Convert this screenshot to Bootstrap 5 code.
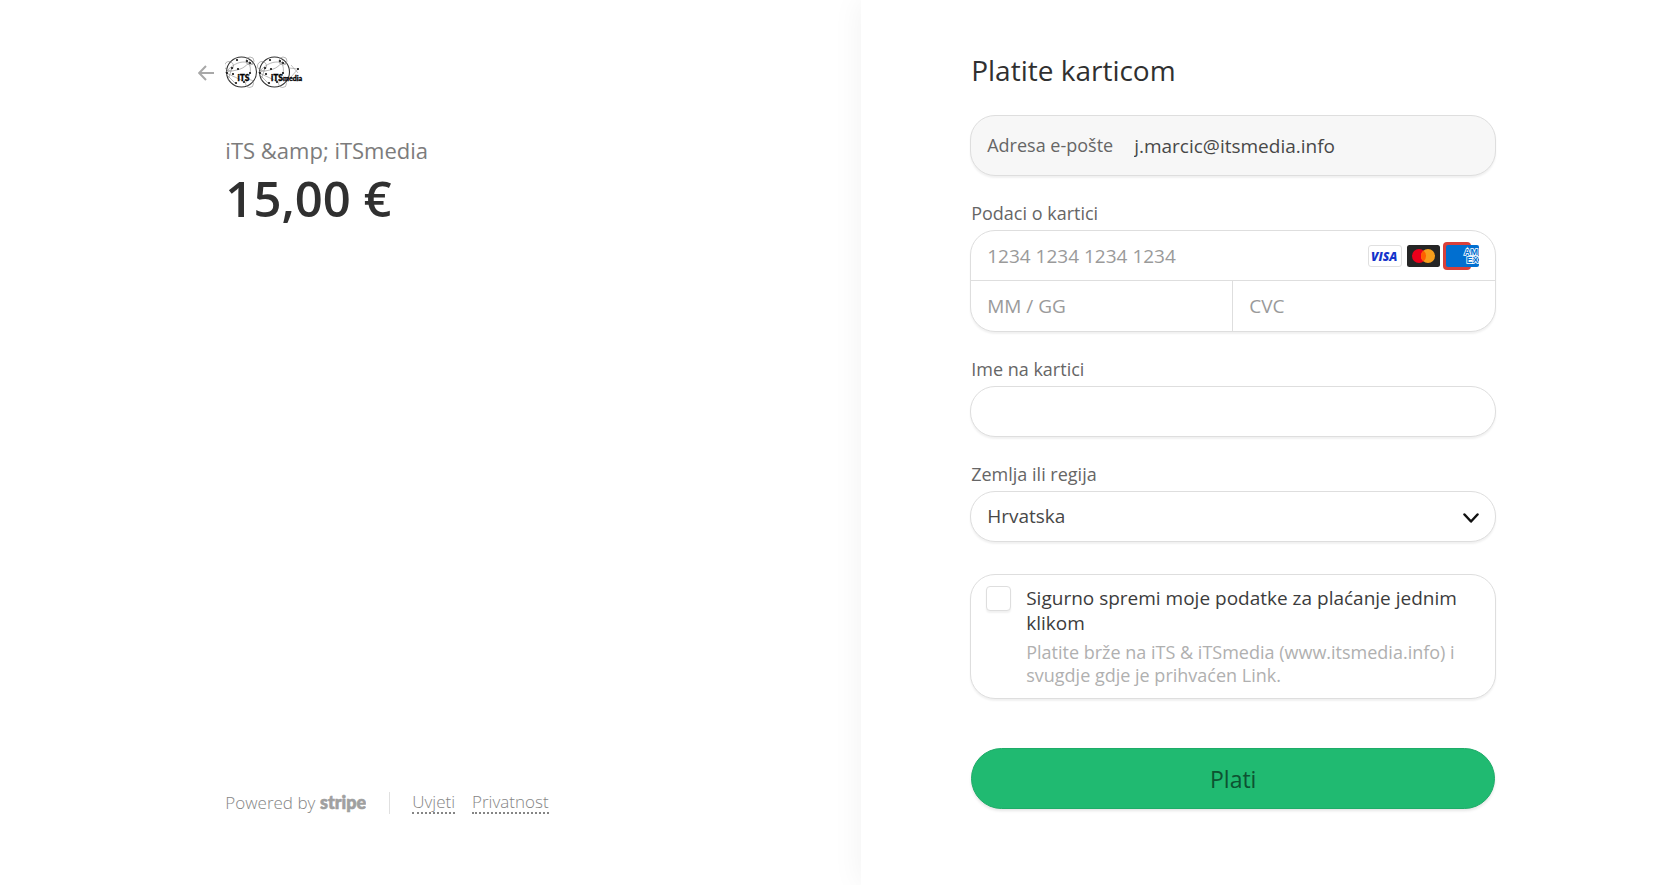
<!DOCTYPE html>
<html lang="hr">
<head>
<meta charset="utf-8">
<meta name="viewport" content="width=device-width, initial-scale=1">
<title>iTS &amp; iTSmedia</title>
<link href="https://cdn.jsdelivr.net/npm/bootstrap@5.3.0/dist/css/bootstrap.min.css" rel="stylesheet">
<style>
  body { font-family: "Open Sans", sans-serif; color: #303030; background: #fff; }
  .summary { width: 52.1%; padding: 56px 24px 69px 12%; }
  .summary-head { gap: 11px; }
  .back-link { line-height: 0; }
  .summary-body { padding-left: 27px; }
  .product { font-size: 22px; line-height: 32px; color: #7c7c7c; margin-top: 45px; }
  .amount { font-size: 49px; line-height: 64px; font-weight: 600; color: #303030; }
  .foot { font-size: 17px; line-height: 26px; font-weight: 300; color: #858585; padding-left: 27px; }
  .foot a { color: #858585; text-decoration: none; line-height: 20px; border-bottom: 2px dotted #858585; }
  .foot .rule { border-left: 1px solid #e0e0e0; padding-left: 22px; margin-left: 23px; gap: 17px; }
  .pay { flex: 1; padding: 50px 24px 72px 109px; background: #fff; box-shadow: 0 0 30px rgba(0,0,0,.06); }
  .pay-form { max-width: 526px; }
  .pay-title { font-size: 28px; line-height: 40px; margin: 0 0 25px 1px; color: #303030; font-weight: 400; }
  .box { border: 1px solid #dedede; border-radius: 25px; background: #fff; box-shadow: 0 2px 2px rgba(0,0,0,.06); }
  .email-box { background: #f7f7f7; height: 61px; padding: 0 16px; gap: 21px; font-size: 19px; }
  .email-box label { font-size: 18px; color: #666; }
  .caption { font-size: 18px; line-height: 26px; color: #666; margin: 0 0 4px 1px; }
  .field { border: 0; background: none; padding: 0 16px; height: 49px; font-size: 19px; color: #484848; outline: 0; min-width: 0; }
  .field::placeholder { color: #9a9a9a; opacity: 1; }
  .line-top { border-top: 1px solid #dedede; }
  .line-top .field { height: 50px; }
  .line-end { border-right: 1px solid #dedede; }
  .group { margin-top: 24px; }
  .country { appearance: none; padding-right: 48px; }
  .chevron { position: absolute; right: 16px; top: 21px; pointer-events: none; }
  .save { margin-top: 32px; padding: 11px 16px 11px 15px; gap: 15px; }
  .save input { appearance: none; flex: none; width: 25px; height: 25px; margin: 0; border: 1px solid #dedede; border-radius: 4px; box-shadow: 0 2px 2px rgba(0,0,0,.06); background: #fff; }
  .save-title { font-size: 19px; line-height: 25px; font-weight: 500; color: #3c3c3c; }
  .save-note { font-size: 18px; line-height: 23px; color: #b0b0b0; margin-top: 5px; }
  .pay-btn { height: 61px; margin: 49px 1px 0; border: 1px solid #1eac68; border-radius: 31px; background: #20ba71; color: #0d5231; font-size: 23px; line-height: 32px; box-shadow: 0 2px 3px rgba(0,0,0,.1); }
</style>
</head>
<body>
<div class="d-flex min-vh-100">
  <section class="summary d-flex flex-column justify-content-between">
    <div>
      <div class="summary-head d-flex align-items-center">
        <a class="back-link" href="#" aria-label="Natrag"><svg width="16" height="16" viewBox="0 0 16 16" fill="none" stroke="#a8a8a8" stroke-width="2"><path d="M16 8H1.500M8 1L1.200 8L8 15"/></svg></a>
        <svg width="78" height="33" viewBox="0 0 78 33" role="img" aria-label="iTS iTSmedia">
          <defs>
            <g id="globe">
              <circle cx="16.500" cy="16" r="15" fill="none" stroke="#333" stroke-width="1.100"/>
              <g fill="none" stroke="#888" stroke-width=".6"><path d="M0 17C8 8 16 3 28 8M1 16C10 14 20 15 26 3M1 17C8 20 14 23 18 25M1 18L10 27M7 12L3 24M19 25C27 20 27 10 22 5"/><circle cx="24.500" cy="27.500" r="4"/><circle cx="25" cy="5" r="4"/><circle cx="4" cy="10" r="4.500"/></g>
              <g fill="#111"><circle cx="12" cy="4" r="1.100"/><circle cx="22" cy="5" r="1.100"/><circle cx="25" cy="7" r="1.100"/><circle cx="7" cy="12" r="1.100"/><circle cx="13" cy="13" r="1.100"/><circle cx="2" cy="17" r="1.100"/><circle cx="8" cy="18" r="1.100"/><circle cx="25" cy="17" r="1.100"/><circle cx="11" cy="27" r="1.100"/><circle cx="19" cy="26" r="1.100"/></g>
            </g>
          </defs>
          <use href="#globe"/><use href="#globe" x="33"/>
          <path d="M64 12L73 13L66 21M66 9L73 17" fill="none" stroke="#999" stroke-width=".6"/><circle cx="73" cy="13" r="1"/>
          <g font-family="Lato, sans-serif" font-weight="900" stroke="#000" stroke-width=".3"><text x="12.500" y="25" font-size="8.500">iTS</text><text x="46" y="25" font-size="8.500">iTS</text><text x="58" y="25" font-size="7">media</text></g>
        </svg>
      </div>
      <div class="summary-body">
        <div class="product">iTS &amp;amp; iTSmedia</div>
        <div class="amount">15,00 €</div>
      </div>
    </div>
    <footer class="foot d-flex align-items-center">
      <span>Powered by</span>
      <svg class="ms-1" width="47" height="26" role="img" aria-label="stripe"><text x="1" y="19" font-family="Lato, sans-serif" font-weight="900" font-size="18" fill="#a0a0a0" stroke="#a0a0a0" stroke-width=".6">stripe</text></svg>
      <nav class="rule d-flex"><a href="#">Uvjeti</a><a href="#">Privatnost</a></nav>
    </footer>
  </section>

  <main class="pay">
    <form class="pay-form">
      <h1 class="pay-title">Platite karticom</h1>
      <div class="box email-box d-flex align-items-center">
        <label for="email">Adresa e-pošte</label>
        <input id="email" class="field p-0 flex-fill" type="email" value="j.marcic@itsmedia.info" readonly>
      </div>

      <div class="group">
        <label class="caption d-block" for="number">Podaci o kartici</label>
        <div class="box">
          <div class="d-flex align-items-center">
            <input id="number" class="field flex-fill" type="text" placeholder="1234 1234 1234 1234">
            <svg class="me-3" width="111" height="28" viewBox="0 0 111 28" aria-hidden="true">
              <rect x=".5" y="3.500" width="33" height="21" rx="2.500" fill="#fff" stroke="#e0e0e0"/>
              <text x="3" y="18.500" font-family="Open Sans, sans-serif" font-size="12" font-weight="800" font-style="italic" fill="#1434cb">VISA</text>
              <rect x="39" y="3" width="33" height="22" rx="2.500" fill="#252525"/>
              <circle cx="51" cy="14" r="7" fill="#eb001b"/><circle cx="60" cy="14" r="7" fill="#f79e1b"/>
              <path d="M55.500 8.600a7 7 0 0 1 0 10.800a7 7 0 0 1 0-10.800z" fill="#ff5f00"/>
              <rect x="75" y="0" width="28" height="28" rx="4" fill="#d9403a"/>
              <rect x="78" y="3" width="33" height="22" rx="2" fill="#016fd0"/>
              <g font-family="Liberation Sans, sans-serif" font-size="9" font-weight="700" fill="#016fd0" stroke="#fff" stroke-width="1.600" paint-order="stroke"><text x="96" y="13">AM</text><text x="98.500" y="21">EX</text></g>
            </svg>
          </div>
          <div class="d-flex line-top">
            <input class="field w-50 line-end" type="text" placeholder="MM / GG" aria-label="Datum isteka">
            <input class="field w-50" type="text" placeholder="CVC" aria-label="CVC">
          </div>
        </div>
      </div>

      <div class="group">
        <label class="caption d-block" for="holder">Ime na kartici</label>
        <div class="box"><input id="holder" class="field w-100 d-block" type="text"></div>
      </div>

      <div class="group">
        <label class="caption d-block" for="country">Zemlja ili regija</label>
        <div class="box position-relative">
          <select id="country" class="field country w-100 d-block"><option>Hrvatska</option></select>
          <svg class="chevron" width="16" height="11" viewBox="0 0 16 11" fill="none" stroke="#111" stroke-width="2.500" stroke-linecap="round" stroke-linejoin="round"><path d="M1.500 1.500L8 8.500L14.500 1.500"/></svg>
        </div>
      </div>

      <div class="box save d-flex align-items-start">
        <input id="save" type="checkbox">
        <label for="save">
          <span class="save-title d-block">Sigurno spremi moje podatke za plaćanje jednim klikom</span>
          <span class="save-note d-block">Platite brže na iTS &amp; iTSmedia (www.itsmedia.info) i svugdje gdje je prihvaćen Link.</span>
        </label>
      </div>

      <div class="d-grid"><button class="pay-btn" type="submit">Plati</button></div>
    </form>
  </main>
</div>
<script src="https://cdn.jsdelivr.net/npm/bootstrap@5.3.0/dist/js/bootstrap.bundle.min.js"></script>
</body>
</html>
